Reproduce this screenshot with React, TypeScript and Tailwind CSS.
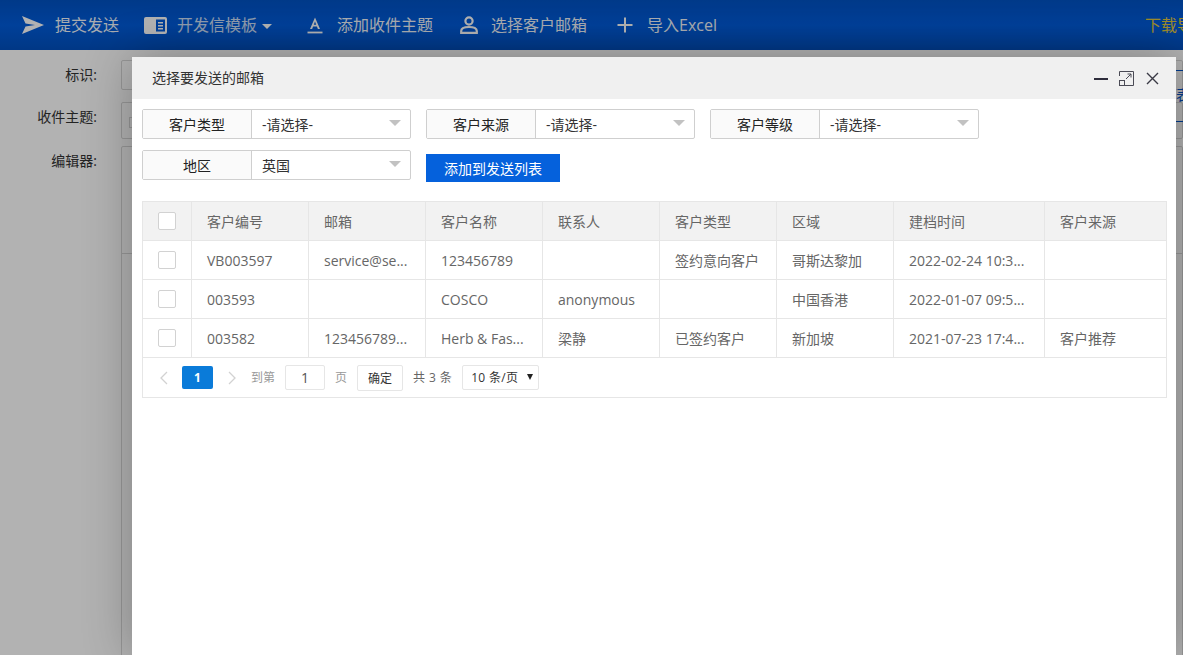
import React from "react";

const FONT = "font-['Open_Sans','Noto_Sans_CJK_SC',sans-serif]";

function NavIcon({ kind }: { kind: string }) {
  if (kind === "send")
    return (
      <svg width="22" height="18" viewBox="0 0 22 18" className="mr-[11px] fill-white">
        <path d="M0 0 L22 9 L0 18 L3.5 10.5 L13 9 L3.5 7.5 Z" />
      </svg>
    );
  if (kind === "template")
    return (
      <svg width="23" height="17" viewBox="0 0 23 17" className="mr-[10px]">
        <rect x="0" y="0" width="23" height="17" rx="2" fill="#fff" />
        <rect x="12" y="2.5" width="9" height="12" fill="#005cdc" />
        <path d="M14 5h5v1.4h-5zM14 8h5v1.4h-5zM14 11h5v1.4h-5z" fill="#fff" />
      </svg>
    );
  if (kind === "font")
    return (
      <svg width="16" height="17" viewBox="0 0 16 17" className="mr-[14px]">
        <path d="M8 0.5 L13 12 H10.9 L9.9 9.4 H6.1 L5.1 12 H3 Z M6.8 7.7 H9.2 L8 4.4 Z" fill="#fff" fillRule="evenodd" />
        <rect x="0.5" y="14.6" width="15" height="1.8" fill="#fff" />
      </svg>
    );
  if (kind === "user")
    return (
      <svg width="18" height="18" viewBox="0 0 18 18" className="mr-[13px]" fill="none" stroke="#fff" strokeWidth="2.2">
        <circle cx="9" cy="5" r="3.6" />
        <path d="M1.2 16.8 V15 C1.2 12.4 4 11 9 11 C14 11 16.8 12.4 16.8 15 V16.8 Z" />
      </svg>
    );
  return (
    <svg width="16" height="16" viewBox="0 0 16 16" className="mr-[14px]" fill="#fff">
      <rect x="7" y="0.5" width="2" height="15" />
      <rect x="0.5" y="7" width="15" height="2" />
    </svg>
  );
}

function NavItem({ kind, label, caret }: { kind: string; label: string; caret?: boolean }) {
  return (
    <div className="flex items-center text-[16px] text-white">
      <NavIcon kind={kind} />
      <span className={caret ? "opacity-80" : "opacity-95"}>{label}</span>
      {caret && <span className="ml-[5px] mt-[3px] h-0 w-0 border-x-[5px] border-t-[5px] border-x-transparent border-t-white" />}
    </div>
  );
}

function PageRow({ label, className, children }: { label: string; className: string; children?: React.ReactNode }) {
  return (
    <div className="flex">
      <div className="w-[98px] shrink-0 pr-[1px] pt-[4px] text-right text-[14px] text-[#333]">{label}</div>
      <div className={`ml-[23px] flex-1 rounded-[2px] border border-[#d9d9d9] ${className}`}>{children}</div>
    </div>
  );
}

function SelectGroup({ label, value }: { label: string; value: string }) {
  return (
    <div className="flex h-[30px] w-[269px] rounded-[2px] border border-[#cfcfcf] text-[14px]">
      <div className="flex w-[109px] shrink-0 items-center justify-center border-r border-[#cfcfcf] bg-[#fafafa] text-[#222]">{label}</div>
      <div className="flex flex-1 items-center justify-between pl-[10px] pr-[9px] text-[#333]">
        <span>{value}</span>
        <span className="mb-[2px] h-0 w-0 border-x-[6px] border-t-[6px] border-x-transparent border-t-[#c2c2c2]" />
      </div>
    </div>
  );
}

const HEAD = ["客户编号", "邮箱", "客户名称", "联系人", "客户类型", "区域", "建档时间", "客户来源"];
const ROWS = [
  ["VB003597", "service@se...", "123456789", "", "签约意向客户", "哥斯达黎加", "2022-02-24 10:3...", ""],
  ["003593", "", "COSCO", "anonymous", "", "中国香港", "2022-01-07 09:5...", ""],
  ["003582", "123456789...", "Herb & Fas...", "梁静", "已签约客户", "新加坡", "2021-07-23 17:4...", "客户推荐"],
];

function Check() {
  return <div className="ml-[15px] h-[18px] w-[18px] rounded-[2px] border border-[#d2d2d2] bg-white" />;
}

function Chevron({ dir }: { dir: "l" | "r" }) {
  return (
    <svg width="9" height="14" viewBox="0 0 9 14" fill="none" stroke="#d2d2d2" strokeWidth="1.3">
      <path d={dir === "l" ? "M8 1 L2 7 L8 13" : "M1 1 L7 7 L1 13"} />
    </svg>
  );
}

export default function App() {
  return (
    <div className={`relative h-[655px] w-[1183px] overflow-hidden bg-white ${FONT}`}>
      <header className="flex h-[50px] items-center bg-gradient-to-b from-[#0052c4] via-[#005cdc] to-[#0050bf] pl-[22px]">
        <NavItem kind="send" label="提交发送" />
        <div className="w-[25px]" />
        <NavItem kind="template" label="开发信模板" caret />
        <div className="w-[35px]" />
        <NavItem kind="font" label="添加收件主题" />
        <div className="w-[27px]" />
        <NavItem kind="user" label="选择客户邮箱" />
        <div className="w-[30px]" />
        <NavItem kind="plus" label="导入Excel" />
        <div className="ml-auto w-[38px] overflow-hidden whitespace-nowrap text-[16px] text-[#e0c83c]">下载导入模板</div>
      </header>

      <main className="flex flex-col">
        <div className="mt-[10px]">
          <PageRow label="标识:" className="h-[30px]" />
        </div>
        <div className="mt-[12px]">
          <PageRow label="收件主题:" className="h-[37px]">
            <div className="ml-[7px] mt-[14px] h-[11px] w-[11px] border border-[#d9d9d9]" />
          </PageRow>
        </div>
        <div className="mt-[7px]">
          <PageRow label="编辑器:" className="h-[520px]">
            <div className="h-[107px] border-b border-[#d9d9d9]" />
          </PageRow>
        </div>
      </main>

      <div className="absolute right-0 top-[70px] flex h-[52px] w-[7px] flex-col overflow-hidden border-y border-[#0055cc]">
        <span className="mt-[14px] whitespace-nowrap text-[14px] leading-[20px] text-[#0055cc]">表</span>
      </div>

      <div className="absolute inset-0 bg-black/30" />

      <section className="absolute left-[132px] top-[57px] flex h-[598px] w-[1044px] flex-col rounded-t-[2px] bg-white shadow-[1px_1px_50px_rgba(0,0,0,0.3)]">
        <div className="flex h-[42px] shrink-0 items-center justify-between bg-[#f0f0f0] pl-[20px] pr-[17px]">
          <span className="mb-[2px] text-[14px] text-[#333]">选择要发送的邮箱</span>
          <div className="flex items-center">
            <svg width="14" height="14" viewBox="0 0 14 14" className="mr-[11px]">
              <rect x="0" y="7" width="14" height="2" fill="#2e2d3c" />
            </svg>
            <svg width="15" height="15" viewBox="0 0 15 15" fill="none" stroke="#4a4a55" className="mr-[12px]">
              <path d="M0.5 5 V0.5 H14.5 V14.5 H5" />
              <rect x="0.5" y="9.5" width="5" height="5" />
              <path d="M7 8 L12 3 M8.5 3 H12 V6.5" />
            </svg>
            <svg width="13" height="13" viewBox="0 0 13 13" stroke="#3a3a45" strokeWidth="1.4">
              <path d="M1 1 L12 12 M12 1 L1 12" />
            </svg>
          </div>
        </div>

        <div className="flex flex-col pl-[10px] pr-[9px]">
          <div className="mt-[10px] flex gap-[15px]">
            <SelectGroup label="客户类型" value="-请选择-" />
            <SelectGroup label="客户来源" value="-请选择-" />
            <SelectGroup label="客户等级" value="-请选择-" />
          </div>
          <div className="mt-[11px] flex gap-[15px]">
            <SelectGroup label="地区" value="英国" />
            <button className="mt-[4px] flex h-[28px] w-[134px] items-center justify-center bg-[#0561dc] text-[14px] text-white">添加到发送列表</button>
          </div>

          <div className="mt-[19px] border border-[#e6e6e6]">
            <table className="w-full table-fixed border-separate border-spacing-0 text-[14px] text-[#666]">
              <colgroup>
                <col className="w-[49px]" />
                <col className="w-[117px]" />
                <col className="w-[117px]" />
                <col className="w-[117px]" />
                <col className="w-[117px]" />
                <col className="w-[117px]" />
                <col className="w-[117px]" />
                <col className="w-[151px]" />
                <col />
              </colgroup>
              <thead>
                <tr className="h-[39px] bg-[#f2f2f2] text-left">
                  <th className="border-b border-r border-[#e6e6e6] font-normal"><Check /></th>
                  {HEAD.map((h, i) => (
                    <th key={h + i} className={`border-b border-[#e6e6e6] px-[15px] font-normal ${i < 7 ? "border-r" : ""}`}>{h}</th>
                  ))}
                </tr>
              </thead>
              <tbody>
                {ROWS.map((r) => (
                  <tr key={r[0]} className="h-[39px]">
                    <td className="border-b border-r border-[#e6e6e6]"><Check /></td>
                    {r.map((c, i) => (
                      <td key={i} className={`whitespace-nowrap border-b border-[#e6e6e6] px-[15px] ${i < 7 ? "border-r" : ""}`}>{c}</td>
                    ))}
                  </tr>
                ))}
              </tbody>
            </table>
            <div className="flex h-[39px] items-center text-[12px] text-[#999]">
              <div className="ml-[16px] flex w-[9px] justify-center"><Chevron dir="l" /></div>
              <div className="ml-[14px] flex h-[23px] w-[31px] items-center justify-center rounded-[2px] bg-[#0a7bd9] font-bold text-white">1</div>
              <div className="ml-[15px] flex w-[9px] justify-center"><Chevron dir="r" /></div>
              <span className="ml-[14px]">到第</span>
              <div className="ml-[10px] flex h-[25px] w-[40px] items-center justify-center rounded-[2px] border border-[#e6e6e6] text-[14px] text-[#555]">1</div>
              <span className="ml-[10px]">页</span>
              <div className="ml-[10px] flex h-[26px] w-[46px] items-center justify-center rounded-[2px] border border-[#e6e6e6] pt-[2px] text-[#333]">确定</div>
              <span className="ml-[10px] tracking-[0.4px] text-[#666]">共 3 条</span>
              <div className="ml-[10px] flex h-[25px] w-[77px] items-center justify-between rounded-[2px] border border-[#e6e6e6] pl-[8px] pr-[5px] tracking-[0.3px] text-[#333]">
                <span>10 条/页</span>
                <span className="mb-[2px] h-0 w-0 border-x-[3.5px] border-t-[6px] border-x-transparent border-t-[#222]" />
              </div>
            </div>
          </div>
        </div>
      </section>
    </div>
  );
}
